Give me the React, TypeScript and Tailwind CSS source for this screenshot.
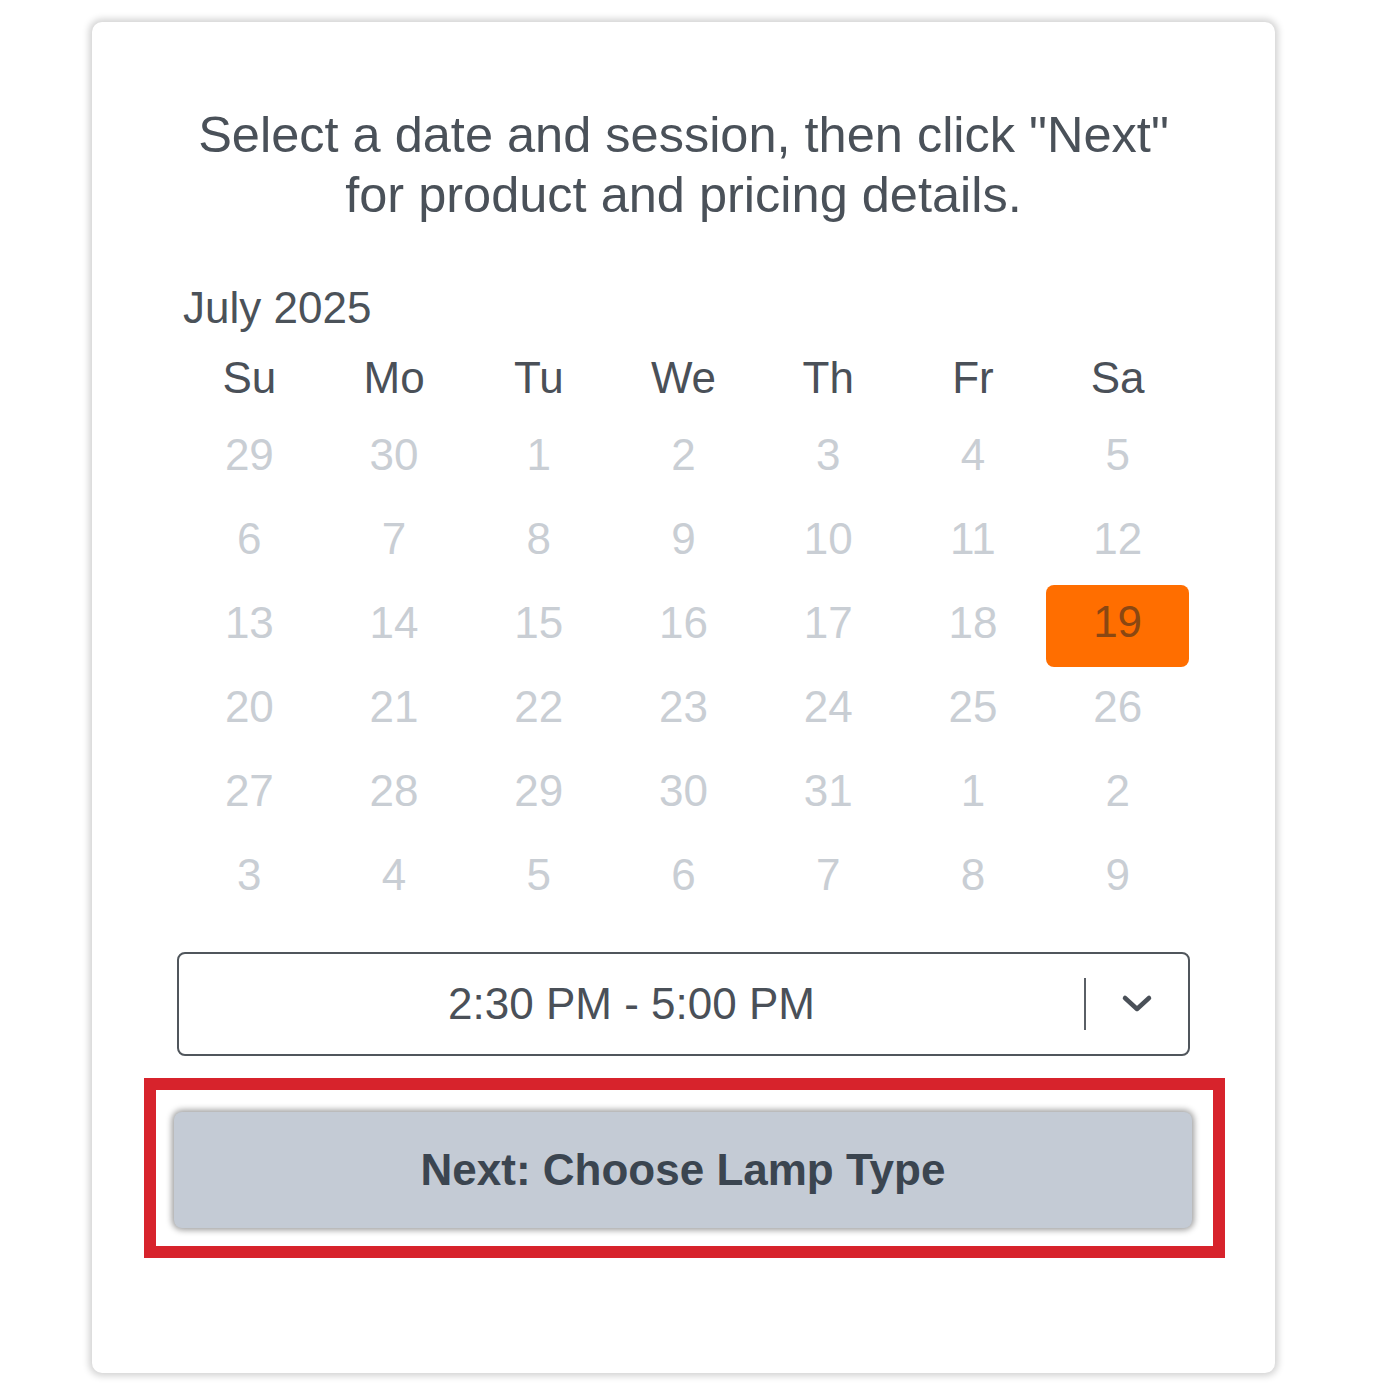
import React from "react";

const heads = ["Su", "Mo", "Tu", "We", "Th", "Fr", "Sa"];
const weeks = [
  [29, 30, 1, 2, 3, 4, 5],
  [6, 7, 8, 9, 10, 11, 12],
  [13, 14, 15, 16, 17, 18, 19],
  [20, 21, 22, 23, 24, 25, 26],
  [27, 28, 29, 30, 31, 1, 2],
  [3, 4, 5, 6, 7, 8, 9],
];

export default function App() {
  return (
    <div
      className="w-[1400px] h-[1400px] bg-white pt-[22px] pl-[92px]"
      style={{ fontFamily: '"Liberation Sans", Arial, sans-serif' }}
    >
      <div className="w-[1183px] h-[1351px] bg-white rounded-[10px] shadow-[0_0_7px_3px_rgba(0,0,0,0.18)] flex flex-col px-[85px] pt-[83px]">
        <p className="text-center text-[50.5px] leading-[60px] text-[#4a5159] -mx-[40px]">
          Select a date and session, then click "Next"
          <br />
          for product and pricing details.
        </p>
        <div className="mt-[57px] pl-[6px] text-[44px] leading-[52px] text-[#4b5259]">July 2025</div>
        <div className="grid grid-cols-7 mt-[9px]">
          {heads.map((h) => (
            <div key={h} className="h-[70px] flex items-center justify-center text-[44px] text-[#4a5058]">
              {h}
            </div>
          ))}
          {weeks.flat().map((d, i) => {
            const sel = i === 20;
            return (
              <div key={i} className="h-[84px] flex items-center justify-center">
                {sel ? (
                  <div className="w-[143px] h-[82px] mt-[6px] rounded-[8px] bg-[#ff6e00] flex items-center justify-center text-[44px] text-[#8a4712] pb-[8px]">
                    {d}
                  </div>
                ) : (
                  <span className="text-[44px] text-[#c9ced4]">{d}</span>
                )}
              </div>
            );
          })}
        </div>
        <div className="mt-[35px] h-[104px] border-2 border-[#50565c] rounded-[8px] flex items-center">
          <div className="flex-1 text-center text-[44px] text-[#4a5058]">2:30 PM - 5:00 PM</div>
          <div className="w-[2px] h-[52px] bg-[#5a5f65]" />
          <div className="w-[102px] flex items-center justify-center">
            <svg width="32" height="20" viewBox="0 0 32 20" fill="none">
              <path d="M4 4 L16 15 L28 4" stroke="#4a5058" strokeWidth="4.5" strokeLinecap="round" strokeLinejoin="round" />
            </svg>
          </div>
        </div>
        <div className="mt-[22px] -ml-[33px] -mr-[35px] h-[180px] border-[12px] border-[#d7232c] pt-[22px] pl-[18px] pr-[21px] pb-[18px]">
          <div className="h-[116px] rounded-[8px] bg-[#c4cbd5] shadow-[0_0_6px_2px_rgba(0,0,0,0.4)] flex items-center justify-center text-[44px] font-bold text-[#3b4550]">
            Next: Choose Lamp Type
          </div>
        </div>
      </div>
    </div>
  );
}
